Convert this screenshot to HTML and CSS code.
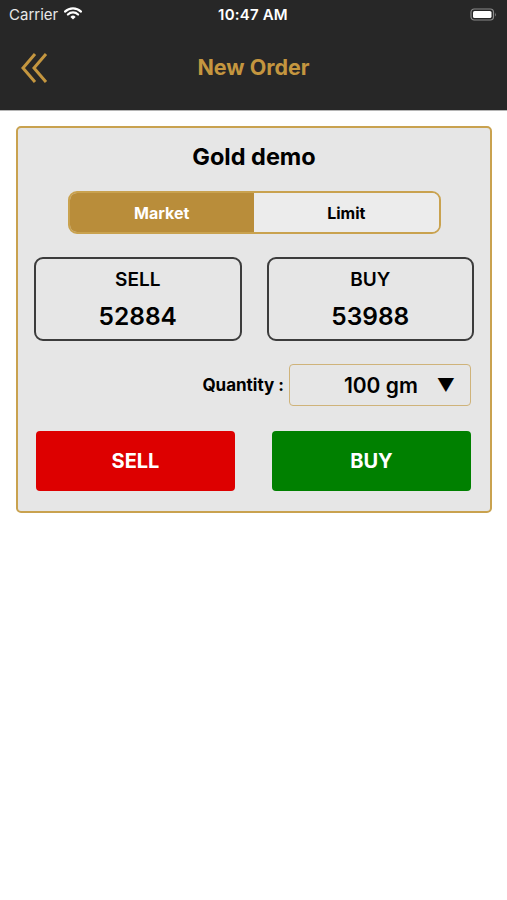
FILE: index.html
```html
<!DOCTYPE html>
<html lang="en">
<head>
    <meta charset="UTF-8">
    <meta name="viewport" content="width=device-width, initial-scale=1.0">
    <title>New Order</title>
    <link rel="stylesheet" href="styles.css">
</head>
<body>

    <div class="topbar">
        <div class="status-bar">
            <div class="carrier">
                Carrier
                <svg class="wifi" width="18" height="13" viewBox="0 0 18 13">
                    <path d="M1 4.6 A11.5 11.5 0 0 1 17 4.6" fill="none" stroke="#fff" stroke-width="2.2" stroke-linecap="round"/>
                    <path d="M3.9 7.5 A7.3 7.3 0 0 1 14.1 7.5" fill="none" stroke="#fff" stroke-width="2.2" stroke-linecap="round"/>
                    <path d="M9 12.4 L6.4 9.9 A3.7 3.7 0 0 1 11.6 9.9 Z" fill="#fff"/>
                </svg>
            </div>
            <div class="time">10:47 AM</div>
            <div class="battery">
                <svg width="27" height="13" viewBox="0 0 27 13">
                    <rect x="1" y="1" width="22.5" height="11" rx="3.2" fill="none" stroke="#8a8a8a" stroke-width="1.2"/>
                    <rect x="3" y="3" width="18.5" height="7" rx="1.6" fill="#fff"/>
                    <path d="M25 4.5 Q26.5 6.5 25 8.5 Z" fill="#8a8a8a"/>
                </svg>
            </div>
        </div>
        <div class="nav-bar">
            <button class="back">
                <svg width="28" height="32" viewBox="0 0 28 32">
                    <polyline points="14,2 2,16 14,30" fill="none" stroke="#c4963f" stroke-width="3"/>
                    <polyline points="25,2 13,16 25,30" fill="none" stroke="#c4963f" stroke-width="3"/>
                </svg>
            </button>
            <h1>New Order</h1>
        </div>
    </div>

    <div class="page">
        <div class="order-card">
            <h2>Gold demo</h2>

            <div class="segment">
                <div class="segment-item active">Market</div>
                <div class="segment-item">Limit</div>
            </div>

            <div class="prices">
                <div class="price-box">
                    <div class="price-label">SELL</div>
                    <div class="price-value">52884</div>
                </div>
                <div class="price-box">
                    <div class="price-label">BUY</div>
                    <div class="price-value">53988</div>
                </div>
            </div>

            <div class="quantity-row">
                <span class="quantity-label">Quantity :</span>
                <div class="quantity-select">
                    <span class="quantity-value">100 gm</span>
                    <span class="caret">&#9660;</span>
                </div>
            </div>

            <div class="actions">
                <button class="btn btn-sell">SELL</button>
                <button class="btn btn-buy">BUY</button>
            </div>
        </div>
    </div>

</body>
</html>
```

FILE: styles.css
```css
body {
    font-family: 'Inter', 'Liberation Sans', sans-serif;
    margin: 0;
    background-color: #fff;
    color: #000;
}
.topbar {
    background-color: #272727;
    border-bottom: 1px solid #b5b5b5;
}
.status-bar {
    height: 28px;
    display: flex;
    align-items: center;
    justify-content: space-between;
    padding: 0 10px 0 9px;
    color: #fff;
    font-size: 15px;
}
.carrier {
    display: flex;
    align-items: center;
    gap: 6px;
    width: 110px;
    color: #e8e8e8;
}
.wifi {
    margin-top: -2px;
}
.time {
    font-weight: 600;
    letter-spacing: 0.2px;
}
.battery {
    width: 110px;
    display: flex;
    justify-content: flex-end;
}
.nav-bar {
    height: 82px;
    display: flex;
    align-items: center;
    justify-content: center;
    position: relative;
}
.nav-bar h1 {
    margin: 0 0 4px;
    font-size: 21.5px;
    font-weight: 700;
    color: #c4963f;
}
.back {
    position: absolute;
    left: 21px;
    top: 24px;
    background: none;
    border: none;
    padding: 0;
    cursor: pointer;
}
.page {
    padding: 15px 15px 16px 16px;
}
.order-card {
    background: #e6e6e6;
    border: 2px solid #c9a24f;
    border-radius: 5px;
    padding: 15px 16px 20px;
}
.order-card h2 {
    margin: 0;
    text-align: center;
    font-size: 23.5px;
    font-weight: 700;
    line-height: 28px;
}
.segment {
    display: flex;
    width: 369px;
    height: 39px;
    margin: 20px auto 0;
    border: 2px solid #c9a24f;
    border-radius: 9px;
    overflow: hidden;
}
.segment-item {
    flex: 1;
    display: flex;
    align-items: center;
    justify-content: center;
    font-size: 16px;
    font-weight: 700;
    background: #ececec;
}
.segment-item.active {
    background: #b98d3a;
    color: #fff;
}
.prices {
    display: flex;
    gap: 25px;
    margin-top: 23px;
}
.price-box {
    flex: 1;
    height: 80px;
    border: 2px solid #3c3c3c;
    border-radius: 9px;
    display: flex;
    flex-direction: column;
    align-items: center;
    justify-content: center;
}
.price-label {
    font-size: 19px;
    font-weight: 600;
    line-height: 22px;
}
.price-value {
    font-size: 24.5px;
    font-weight: 600;
    line-height: 28px;
    margin-top: 11px;
}
.quantity-row {
    display: flex;
    justify-content: flex-end;
    align-items: center;
    gap: 5px;
    margin-top: 23px;
    padding-right: 3px;
}
.quantity-label {
    font-size: 17px;
    font-weight: 700;
}
.quantity-select {
    height: 40px;
    border: 1px solid #cfb37a;
    border-radius: 4px;
    display: flex;
    align-items: center;
    justify-content: flex-end;
    gap: 19px;
    padding-right: 15px;
    width: 165px;
}
.quantity-value {
    font-size: 21px;
    font-weight: 600;
}
.caret {
    font-size: 18px;
}
.actions {
    display: flex;
    justify-content: space-between;
    margin-top: 25px;
    padding: 0 3px 0 2px;
}
.btn {
    width: 199px;
    height: 60px;
    border: none;
    border-radius: 4px;
    color: #fff;
    font-family: inherit;
    font-size: 20px;
    font-weight: 700;
    cursor: pointer;
}
.btn-sell {
    background: #dd0000;
}
.btn-buy {
    background: #008000;
}
```
